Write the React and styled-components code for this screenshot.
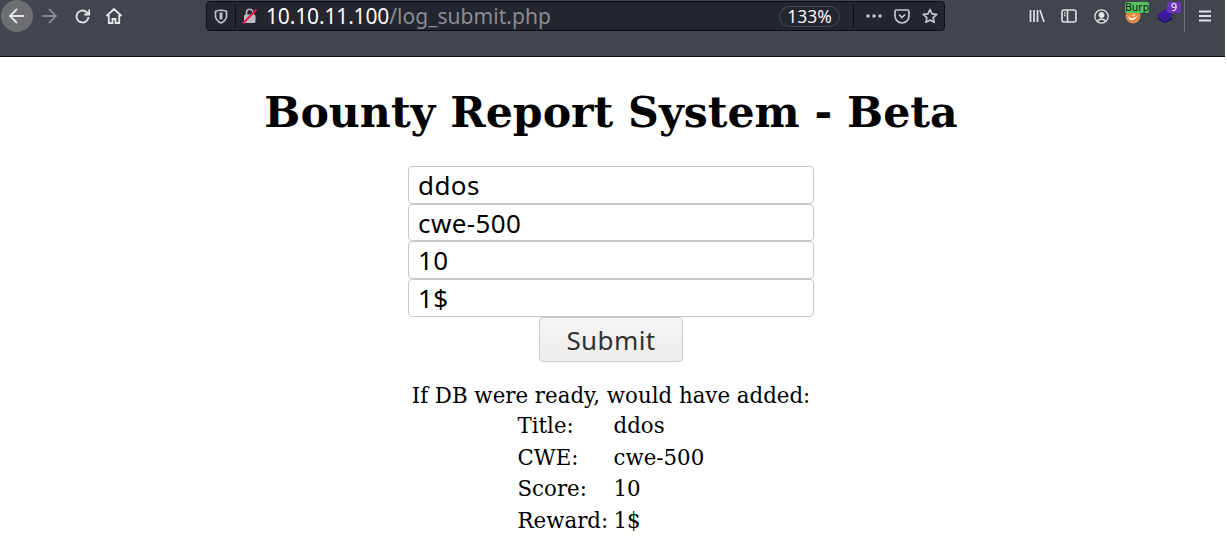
import React from "react";
import styled, { createGlobalStyle } from "styled-components";

const Global = createGlobalStyle`
  html, body { margin: 0; padding: 0; background: #fff; overflow: hidden; }
  #root { width: 1227px; height: 559px; }
`;
const UI = `"Noto Sans", "Open Sans", sans-serif`;

const Toolbar = styled.header`
  width: 1225px; height: 57px; box-sizing: border-box;
  background: #42454e; border-bottom: 1px solid #0e0e11;
  display: flex; align-items: flex-start; position: relative;
`;
const PageWrap = styled.main`
  display: flex; flex-direction: column; align-items: center;
  width: 1222px; font-family: "DejaVu Serif", serif; color: #000;
`;
const NavGroup = styled.nav`
  display: flex; align-items: center; height: 32px; width: 206px; flex: none; padding-left: 1px; box-sizing: border-box;
`;
const NavButton = styled.button`
  width: 32px; height: 32px; padding: 0; border: 0; flex: none;
  margin-left: ${p => p.$gap || 0}px;
  border-radius: 50%; display: flex; align-items: center; justify-content: center;
  background: ${p => p.$active ? "#6c6e74" : "transparent"};
  color: ${p => p.$dim ? "#85878c" : "#e6e6e8"};
`;
const UrlBar = styled.div`
  width: 739px; height: 30px; margin-top: 1px; box-sizing: border-box; flex: none;
  background: #23252f; border: 1px solid #0f1014; border-radius: 4px;
  display: flex; align-items: center; font-family: ${UI}; position: relative;
`;
const UrlIcon = styled.span`
  width: 28px; height: 28px; flex: none; display: flex; align-items: center; justify-content: center; color: #bfbfc3;
`;
const Sep = styled.span`
  width: 1px; height: 24px; background: #0d0e11; flex: none; margin-right: ${p => p.$after || 0}px;
`;
const Url = styled.div`
  font-size: 21px; line-height: 28px; color: #fbfbfe; margin-left: 2px; white-space: nowrap; flex: 1; letter-spacing: -0.15px;
  span { color: #8a8c93; letter-spacing: 0.03px; }
`;
const Zoom = styled.div`
  width: 63px; height: 23px; box-sizing: border-box; border: 1px solid #44475200; border-radius: 12px;
  box-shadow: inset 0 0 0 1px #444752;
  font-size: 17.5px; line-height: 21px; text-align: center; color: #f4f4f6; flex: none; margin-right: 12px;
`;
const UrlAction = styled.span`
  width: 28px; height: 28px; display: flex; align-items: center; justify-content: center; color: #c6c6ca; flex: none;
`;
const Tools = styled.div`
  display: flex; align-items: center; height: 32px; margin-left: 76px; flex: none;
`;
const Tool = styled.span`
  width: 32px; height: 32px; flex: none; display: flex; align-items: center; justify-content: center; color: #e2e2e5; position: relative;
`;
const Badge = styled.span`
  position: absolute; top: 2px; left: ${p => p.$left}px; width: ${p => p.$w}px; height: 11px; text-align: center;
  background: ${p => p.$bg}; color: ${p => p.$fg}; border-radius: 2px;
  font: 10.5px/11px ${UI};
`;
const ToolSep = styled.span`
  width: 1px; height: 32px; background: #70737a; flex: none; margin: 0 4px 0 3px;
`;

const Title = styled.h1`
  margin: 30px 0 0; font-size: 42.67px; line-height: 50px; font-weight: 700; white-space: nowrap; height: 50px;
`;
const Form = styled.form`
  width: 406px; margin-top: 29px; display: flex; flex-direction: column; align-items: center;
`;
const Input = styled.input`
  width: 406px; height: ${p => p.$h}px; box-sizing: border-box; flex: none;
  border: 1px solid #cbc8c4; border-radius: 4px; background: #fff; padding: 0 9px;
  font-family: ${UI}; font-size: 26px; letter-spacing: 0.4px; color: #000; outline: none;
`;
const Submit = styled.button`
  width: 144px; height: 45px; box-sizing: border-box;
  border: 1px solid #cdcac6; border-radius: 4px; background: linear-gradient(#f6f5f4, #edecea);
  font-family: ${UI}; font-size: 26px; letter-spacing: 0.4px; color: #2e3436; padding: 0;
`;
const Notice = styled.p`
  margin: 19px 0 0; font-size: 21.33px; line-height: 29px; white-space: nowrap; height: 29px;
`;
const Results = styled.div`
  display: grid; grid-template-columns: 96px auto; width: 187px;
  font-size: 21.33px; line-height: 31.5px;
`;

const Back = () => <svg width="18" height="18" viewBox="0 0 18 18" fill="none" stroke="currentColor" strokeWidth="1.8"><path d="M16 9H2M9 2L2 9l7 7"/></svg>;
const Forward = () => <svg width="18" height="18" viewBox="0 0 18 18" fill="none" stroke="currentColor" strokeWidth="1.8"><path d="M2 9h14M9 2l7 7-7 7"/></svg>;
const Reload = () => <svg width="17" height="17" viewBox="0 0 17 17" fill="none" stroke="currentColor" strokeWidth="1.8"><path d="M14.5 9a6 6 0 1 1-2-5l2.5 2"/><path d="M15.2 1.5v5h-5" /></svg>;
const Home = () => <svg width="18" height="18" viewBox="0 0 18 18" fill="none" stroke="currentColor" strokeWidth="1.8"><path d="M1.5 9L9 2l7.5 7M3.8 8v8h3.700v-4h3v4h3.700V8"/></svg>;
const Shield = () => <svg width="14" height="15" viewBox="0 0 14 15" fill="none" stroke="currentColor" strokeWidth="1.7"><path d="M1.5 2.2Q7 .3 12.5 2.2V8q-1.5 4.5-5.5 6Q3 12.500 1.500 8z"/><path d="M7 3.500v7" strokeWidth="3"/></svg>;
const Lock = () => <svg width="16" height="16" viewBox="0 0 16 16"><rect x="2" y="6.500" width="11.500" height="8.500" rx="1.500" fill="#bdbdc1"/><path d="M4.500 7V4.500a3.200 3.200 0 0 1 6.400 0V7" fill="none" stroke="#bdbdc1" strokeWidth="1.600"/><path d="M1 15.500L14.500 1.500" stroke="#ee1848" strokeWidth="2"/></svg>;
const Dots = () => <svg width="16" height="4" viewBox="0 0 16 4" fill="currentColor"><circle cx="2" cy="2" r="1.800"/><circle cx="8" cy="2" r="1.800"/><circle cx="14" cy="2" r="1.800"/></svg>;
const Pocket = () => <svg width="16" height="15" viewBox="0 0 16 15" fill="none" stroke="currentColor" strokeWidth="1.700"><path d="M1 2.500Q1 1 2.500 1h11Q15 1 15 2.500V7a7 7 0 0 1-14 0z"/><path d="M5 5.500l3 3 3-3"/></svg>;
const Star = () => <svg width="16" height="16" viewBox="0 0 16 16" fill="none" stroke="currentColor" strokeWidth="1.700" strokeLinejoin="round"><path d="M8 1.500l2 4.300 4.700.6-3.500 3.200.9 4.700L8 12l-4.100 2.300.9-4.700L1.300 6.400 6 5.800z"/></svg>;
const Library = () => <svg width="16" height="14" viewBox="0 0 16 14" fill="none" stroke="currentColor" strokeWidth="1.700"><path d="M1.500 1v12M5 1v12M8.500 1v12M11 1l4 12"/></svg>;
const Sidebar = () => <svg width="16" height="14" viewBox="0 0 16 14" fill="none" stroke="currentColor" strokeWidth="1.600"><rect x="1" y="1" width="14" height="12" rx="2"/><path d="M6.500 1v12M3 4h1.500M3 6.500h1.500" /></svg>;
const Account = () => <svg width="15" height="15" viewBox="0 0 15 15" fill="none" stroke="currentColor" strokeWidth="1.300"><circle cx="7.500" cy="7.500" r="6.600"/><circle cx="7.500" cy="6" r="2.300" fill="currentColor"/><path d="M3.500 11.800q4-3.400 8 0" strokeWidth="1.600"/></svg>;
const Fox = () => <svg width="16" height="16" viewBox="0 0 16 16"><circle cx="8" cy="8" r="7" fill="#e8843a" stroke="#c9a070"/><path d="M3 8q5 5 10-1-3 6-8 5z" fill="#fff"/><path d="M6 7l5-2-2 4z" fill="#f6c28a"/></svg>;
const Stack = () => <svg width="18" height="16" viewBox="0 0 18 16"><path d="M9 1l8 6-8 6-8-6z" fill="#3a1a9c"/><path d="M3 9l6 4.500L15 9l2 1.500-8 5-8-5z" fill="#24107a"/></svg>;
const Menu = () => <svg width="14" height="12" viewBox="0 0 14 12" stroke="currentColor" strokeWidth="2"><path d="M1 1.500h12M1 6h12M1 10.500h12"/></svg>;

const rows = [["Title:", "ddos"], ["CWE:", "cwe-500"], ["Score:", "10"], ["Reward:", "1$"]];

export default function App() {
  return (
    <>
      <Global />
      <Toolbar>
        <NavGroup>
          <NavButton $active><Back /></NavButton>
          <NavButton $dim><Forward /></NavButton>
          <NavButton $gap={1}><Reload /></NavButton>
          <NavButton><Home /></NavButton>
        </NavGroup>
        <UrlBar>
          <UrlIcon><Shield /></UrlIcon>
          <Sep />
          <UrlIcon><Lock /></UrlIcon>
          <Url>10.10.11.100<span>/log_submit.php</span></Url>
          <Zoom>133%</Zoom>
          <Sep $after={6} />
          <UrlAction><Dots /></UrlAction>
          <UrlAction><Pocket /></UrlAction>
          <UrlAction><Star /></UrlAction>
        </UrlBar>
        <Tools>
          <Tool><Library /></Tool>
          <Tool><Sidebar /></Tool>
          <Tool><Account /></Tool>
          <Tool><Fox /><Badge $left={8} $w={24} $bg="#57c25f" $fg="#0c1a0c">Burp</Badge></Tool>
          <Tool><Stack /><Badge $left={18} $w={14} $bg="#6a33b8" $fg="#fff">9</Badge></Tool>
          <ToolSep />
          <Tool><Menu /></Tool>
        </Tools>
      </Toolbar>
      <PageWrap>
        <Title>Bounty Report System - Beta</Title>
        <Form onSubmit={e => e.preventDefault()}>
          <Input $h={38} defaultValue="ddos" />
          <Input $h={37} defaultValue="cwe-500" />
          <Input $h={38} defaultValue="10" />
          <Input $h={38} defaultValue="1$" />
          <Submit>Submit</Submit>
        </Form>
        <Notice>If DB were ready, would have added:</Notice>
        <Results>
          {rows.map(([k, v]) => (
            <React.Fragment key={k}><span>{k}</span><span>{v}</span></React.Fragment>
          ))}
        </Results>
      </PageWrap>
    </>
  );
}
